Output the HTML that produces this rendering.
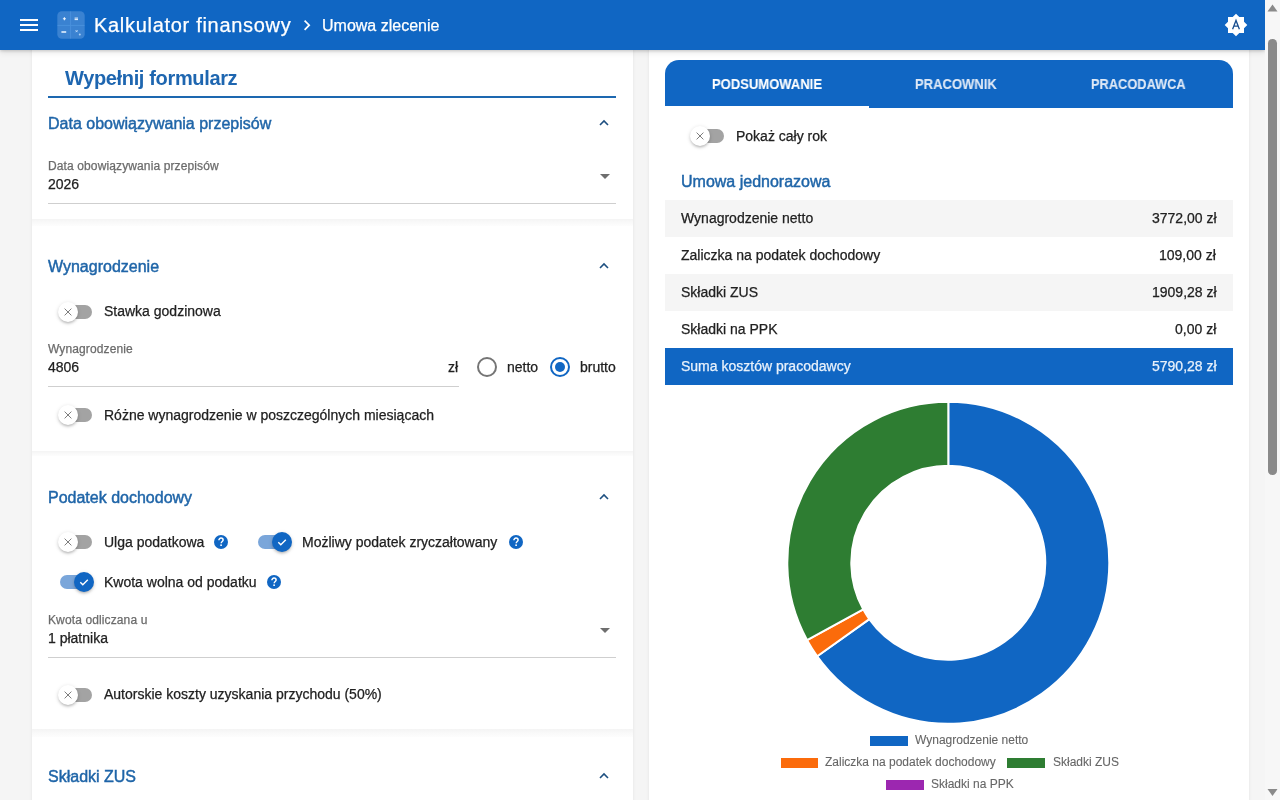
<!DOCTYPE html>
<html lang="pl">
<head>
<meta charset="utf-8">
<style>
*{box-sizing:border-box;margin:0;padding:0}
html,body{width:1280px;height:800px;overflow:hidden}
body{position:relative;background:#f5f5f5;font-family:"Liberation Sans",sans-serif;color:#212121;font-size:14px}
.abs{position:absolute}
.t{position:absolute;white-space:nowrap;line-height:1;will-change:transform;-webkit-text-stroke:0.25px currentColor}
#hdr{left:0;top:0;width:1265px;height:50px;background:#1066c3;box-shadow:0 1px 3px rgba(0,0,0,.18),0 3px 6px rgba(0,0,0,.08);z-index:10}
#sb{left:1265px;top:0;width:15px;height:800px;background:#f7f7f7;z-index:20}
.card{position:absolute;background:#fff}
.sep{background:linear-gradient(#f4f4f4,#fafafa 60%,#fdfdfd)}
.uline{position:absolute;height:1px;background:#cfcfcf}
.trk{width:32px;height:14px;border-radius:7px;background:#a3a3a3}
.trk.on{background:#7aa6da}
.thm{width:20px;height:20px;border-radius:50%;background:#fff;box-shadow:0 2px 3px -1px rgba(0,0,0,.25),0 1px 4px 0 rgba(0,0,0,.14)}
.thm svg{display:block}
.thm.on{background:#1066c3}
.radio{width:20px;height:20px;border-radius:50%;border:2px solid #757575}
.radio.sel{border-color:#1066c3}
.radio.sel div{position:absolute;left:3px;top:3px;width:10px;height:10px;border-radius:50%;background:#1066c3}
.help{width:14px;height:14px;border-radius:50%;background:#1066c3}
.help svg{display:block}
</style>
</head>
<body>

<div id="hdr" class="abs">
  <svg class="abs" style="left:16.5px;top:13px" width="24" height="24" viewBox="0 0 24 24"><path fill="#fff" d="M3 18h18v-2H3v2zm0-5h18v-2H3v2zm0-7v2h18V6H3z"/></svg>
  <svg class="abs" style="left:57px;top:11px" width="28" height="28" viewBox="0 0 28 28"><rect x="0.3" y="0.3" width="27.4" height="27.4" rx="4.5" fill="#3a82d1"/><path d="M0.5 14.4H27.5M13.6 0.5V27.5" stroke="#4b92dc" stroke-width="0.9"/><path d="M7.4 6.2v3M5.9 7.7h3" stroke="#eef6ff" stroke-width="1.1"/><path d="M17.6 7.1h3.4M17.6 8.6h3.4" stroke="#eef6ff" stroke-width="1"/><path d="M4.4 21h4.8" stroke="#eef6ff" stroke-width="1.5"/><path d="M18.6 19.2l2 2M20.6 19.2l-2 2" stroke="#d6e9ff" stroke-width="0.8"/><circle cx="22.8" cy="23.4" r="1" fill="#a9cff7"/></svg>
  <div class="t" style="left:94px;top:15px;font-size:20px;color:#fff;letter-spacing:0.7px">Kalkulator finansowy</div>
  <svg class="abs" style="left:300px;top:17px" width="16" height="16" viewBox="0 0 16 16"><path d="M4.6 3.6l4.6 4.6-4.6 4.6" stroke="#fff" stroke-width="1.7" fill="none"/></svg>
  <div class="t" style="left:322px;top:17.5px;font-size:16px;color:#fff">Umowa zlecenie</div>
  <svg class="abs" style="left:1224px;top:12.75px" width="24" height="24" viewBox="0 0 24 24"><path fill="#fff" d="M20 8.69V4h-4.69L12 .69 8.69 4H4v4.69L.69 12 4 15.31V20h4.69L12 23.31 15.31 20H20v-4.69L23.31 12 20 8.69z"/><path d="M8.6 16.2L12 7.4l3.4 8.8M9.8 13.2h4.4" stroke="#1a4f8f" stroke-width="1.3" fill="none"/></svg>
</div>
<div id="sb" class="abs">
<svg class="abs" style="left:0;top:0" width="15" height="800" viewBox="0 0 15 800"><path d="M2.5 11.5L7.5 4.5L12.5 11.5z" fill="#8a8a8a"/><path d="M2.5 789L7.5 796L12.5 789z" fill="#8a8a8a"/></svg>
<div class="abs" style="left:3px;top:39px;width:8.5px;height:436px;border-radius:4.25px;background:#8a8a8a"></div>
</div>


<div class="abs" style="left:32px;top:40px;width:601px;height:780px;background:#f9f9f9;box-shadow:0 0 3px rgba(0,0,0,.08)"></div>
<div class="card" style="left:32px;top:40px;width:601px;height:780px"></div>
<div class="abs sep" style="left:32px;top:219px;width:601px;height:7px"></div>
<div class="abs sep" style="left:32px;top:451px;width:601px;height:5px"></div>
<div class="abs sep" style="left:32px;top:728.5px;width:601px;height:8.5px"></div>
<div class="card" style="left:649px;top:40px;width:600px;height:780px;box-shadow:0 0 3px rgba(0,0,0,.08)"></div>

<div class="t" style="left:64.5px;top:68.47px;font-size:20px;color:#1e66b0;font-weight:700;letter-spacing:-0.35px;-webkit-text-stroke:0">Wypełnij formularz</div>
<div class="abs" style="left:48px;top:96px;width:568px;height:2px;background:#1d68b0"></div>
<div class="t" style="left:48px;top:116.36px;font-size:16px;color:#1f65a8;font-weight:400;-webkit-text-stroke:0.45px #1f65a8">Data obowiązywania przepisów</div>
<svg class="abs" style="left:598px;top:119px" width="12" height="8" viewBox="0 0 12 8"><path d="M2 6l4-4 4 4" stroke="#1d4f80" stroke-width="1.6" fill="none"/></svg>
<div class="t" style="left:48px;top:160.34px;font-size:12px;color:#6b6b6b;font-weight:400;letter-spacing:0.12px">Data obowiązywania przepisów</div>
<div class="t" style="left:48px;top:177.15px;font-size:14px;color:#212121;font-weight:400;">2026</div>
<svg class="abs" style="left:600px;top:174px" width="10" height="5" viewBox="0 0 10 5"><path d="M0 0h10L5 5z" fill="#6e6e6e"/></svg>
<div class="uline" style="left:48px;top:203px;width:568px"></div>
<div class="t" style="left:48px;top:259.36px;font-size:16px;color:#1f65a8;font-weight:400;-webkit-text-stroke:0.45px #1f65a8">Wynagrodzenie</div>
<svg class="abs" style="left:598px;top:262px" width="12" height="8" viewBox="0 0 12 8"><path d="M2 6l4-4 4 4" stroke="#1d4f80" stroke-width="1.6" fill="none"/></svg>
<div class="abs trk" style="left:60px;top:304.5px"></div><div class="abs thm" style="left:58px;top:301.5px"><svg width="20" height="20" viewBox="0 0 20 20"><path d="M6.6 6.6l6.8 6.8M13.4 6.6l-6.8 6.8" stroke="#7d7d7d" stroke-width="1" fill="none"/></svg></div>
<div class="t" style="left:103.9px;top:304.35px;font-size:14px;color:#212121;font-weight:400;">Stawka godzinowa</div>
<div class="t" style="left:48px;top:342.84px;font-size:12px;color:#6b6b6b;font-weight:400;letter-spacing:0.12px">Wynagrodzenie</div>
<div class="t" style="left:48px;top:359.75px;font-size:14px;color:#212121;font-weight:400;">4806</div>
<div class="uline" style="left:48px;top:386px;width:411px"></div>
<div class="t" style="left:448.4px;top:359.75px;font-size:14px;color:#212121;font-weight:400;">zł</div>
<div class="abs radio" style="left:477px;top:357px"></div>
<div class="t" style="left:507.3px;top:359.75px;font-size:14px;color:#212121;font-weight:400;">netto</div>
<div class="abs radio sel" style="left:549.5px;top:357px"><div></div></div>
<div class="t" style="left:579.5px;top:359.75px;font-size:14px;color:#212121;font-weight:400;">brutto</div>
<div class="abs trk" style="left:60px;top:408px"></div><div class="abs thm" style="left:58px;top:405px"><svg width="20" height="20" viewBox="0 0 20 20"><path d="M6.6 6.6l6.8 6.8M13.4 6.6l-6.8 6.8" stroke="#7d7d7d" stroke-width="1" fill="none"/></svg></div>
<div class="t" style="left:103.9px;top:408.05px;font-size:14px;color:#212121;font-weight:400;">Różne wynagrodzenie w poszczególnych miesiącach</div>
<div class="t" style="left:48px;top:490.36px;font-size:16px;color:#1f65a8;font-weight:400;-webkit-text-stroke:0.45px #1f65a8">Podatek dochodowy</div>
<svg class="abs" style="left:598px;top:493px" width="12" height="8" viewBox="0 0 12 8"><path d="M2 6l4-4 4 4" stroke="#1d4f80" stroke-width="1.6" fill="none"/></svg>
<div class="abs trk" style="left:60px;top:535px"></div><div class="abs thm" style="left:58px;top:532px"><svg width="20" height="20" viewBox="0 0 20 20"><path d="M6.6 6.6l6.8 6.8M13.4 6.6l-6.8 6.8" stroke="#7d7d7d" stroke-width="1" fill="none"/></svg></div>
<div class="t" style="left:103.9px;top:534.75px;font-size:14px;color:#212121;font-weight:400;">Ulga podatkowa</div>
<div class="abs help" style="left:214px;top:535px"><svg width="14" height="14" viewBox="0 0 14 14"><path d="M4.9 5.3c0-1.3 1-2.2 2.1-2.2s2.1.8 2.1 1.9c0 1.4-1.9 1.6-1.9 3.2" stroke="#fff" stroke-width="1.5" fill="none"/><rect x="6.3" y="9.4" width="1.6" height="1.6" fill="#fff"/></svg></div>
<div class="abs trk on" style="left:258px;top:535px"></div><div class="abs thm on" style="left:272px;top:532px"><svg width="20" height="20" viewBox="0 0 20 20"><path d="M6.3 10.2l2.5 2.5 5-5" stroke="#fff" stroke-width="1.4" fill="none"/></svg></div>
<div class="t" style="left:302.09999999999997px;top:534.75px;font-size:14px;color:#212121;font-weight:400;">Możliwy podatek zryczałtowany</div>
<div class="abs help" style="left:509px;top:535px"><svg width="14" height="14" viewBox="0 0 14 14"><path d="M4.9 5.3c0-1.3 1-2.2 2.1-2.2s2.1.8 2.1 1.9c0 1.4-1.9 1.6-1.9 3.2" stroke="#fff" stroke-width="1.5" fill="none"/><rect x="6.3" y="9.4" width="1.6" height="1.6" fill="#fff"/></svg></div>
<div class="abs trk on" style="left:60px;top:575px"></div><div class="abs thm on" style="left:74px;top:572px"><svg width="20" height="20" viewBox="0 0 20 20"><path d="M6.3 10.2l2.5 2.5 5-5" stroke="#fff" stroke-width="1.4" fill="none"/></svg></div>
<div class="t" style="left:103.9px;top:574.75px;font-size:14px;color:#212121;font-weight:400;">Kwota wolna od podatku</div>
<div class="abs help" style="left:267px;top:575px"><svg width="14" height="14" viewBox="0 0 14 14"><path d="M4.9 5.3c0-1.3 1-2.2 2.1-2.2s2.1.8 2.1 1.9c0 1.4-1.9 1.6-1.9 3.2" stroke="#fff" stroke-width="1.5" fill="none"/><rect x="6.3" y="9.4" width="1.6" height="1.6" fill="#fff"/></svg></div>
<div class="t" style="left:48px;top:613.59px;font-size:12px;color:#6b6b6b;font-weight:400;letter-spacing:0.12px">Kwota odliczana u</div>
<div class="t" style="left:48px;top:631.15px;font-size:14px;color:#212121;font-weight:400;">1 płatnika</div>
<svg class="abs" style="left:600px;top:628px" width="10" height="5" viewBox="0 0 10 5"><path d="M0 0h10L5 5z" fill="#6e6e6e"/></svg>
<div class="uline" style="left:48px;top:657px;width:568px"></div>
<div class="abs trk" style="left:60px;top:687.5px"></div><div class="abs thm" style="left:58px;top:684.5px"><svg width="20" height="20" viewBox="0 0 20 20"><path d="M6.6 6.6l6.8 6.8M13.4 6.6l-6.8 6.8" stroke="#7d7d7d" stroke-width="1" fill="none"/></svg></div>
<div class="t" style="left:103.9px;top:687.35px;font-size:14px;color:#212121;font-weight:400;">Autorskie koszty uzyskania przychodu (50%)</div>
<div class="t" style="left:48px;top:769.11px;font-size:16px;color:#1f65a8;font-weight:400;-webkit-text-stroke:0.45px #1f65a8">Składki ZUS</div>
<svg class="abs" style="left:598px;top:772px" width="12" height="8" viewBox="0 0 12 8"><path d="M2 6l4-4 4 4" stroke="#1d4f80" stroke-width="1.6" fill="none"/></svg>

<div class="abs" style="left:665px;top:60px;width:567.5px;height:47.5px;background:#1066c3;border-radius:14px 14px 0 0"></div>
<div class="abs" style="left:665px;top:105.5px;width:204px;height:2px;background:#fff"></div>
<div class="t" style="left:711.5px;top:77.05px;font-size:14px;color:#fff;font-weight:700;transform:scaleX(0.93);transform-origin:0 0;-webkit-text-stroke:0.1px currentColor">PODSUMOWANIE</div>
<div class="t" style="left:915.2px;top:77.05px;font-size:14px;color:#dfe9f6;font-weight:700;transform:scaleX(0.93);transform-origin:0 0;-webkit-text-stroke:0.1px currentColor">PRACOWNIK</div>
<div class="t" style="left:1090.6px;top:77.05px;font-size:14px;color:#dfe9f6;font-weight:700;transform:scaleX(0.915);transform-origin:0 0;-webkit-text-stroke:0.1px currentColor">PRACODAWCA</div>
<div class="abs trk" style="left:692px;top:129.25px"></div><div class="abs thm" style="left:690px;top:126.25px"><svg width="20" height="20" viewBox="0 0 20 20"><path d="M6.6 6.6l6.8 6.8M13.4 6.6l-6.8 6.8" stroke="#7d7d7d" stroke-width="1" fill="none"/></svg></div>
<div class="t" style="left:736.4px;top:129.15px;font-size:14px;color:#212121;font-weight:400;">Pokaż cały rok</div>
<div class="t" style="left:681px;top:174.36px;font-size:16px;color:#1f65a8;font-weight:400;-webkit-text-stroke:0.45px #1f65a8">Umowa jednorazowa</div>
<div class="abs" style="left:665px;top:200px;width:567.5px;height:37px;background:#f5f5f5"></div>
<div class="t" style="left:681px;top:211.15px;font-size:14px;color:#212121;font-weight:400;">Wynagrodzenie netto</div>
<div class="t" style="right:63.700000000000045px;top:211.15px;font-size:14px;color:#212121;font-weight:400;">3772,00 zł</div>
<div class="abs" style="left:665px;top:237px;width:567.5px;height:37px;background:#fff"></div>
<div class="t" style="left:681px;top:248.15px;font-size:14px;color:#212121;font-weight:400;">Zaliczka na podatek dochodowy</div>
<div class="t" style="right:63.700000000000045px;top:248.15px;font-size:14px;color:#212121;font-weight:400;">109,00 zł</div>
<div class="abs" style="left:665px;top:274px;width:567.5px;height:37px;background:#f5f5f5"></div>
<div class="t" style="left:681px;top:285.15px;font-size:14px;color:#212121;font-weight:400;">Składki ZUS</div>
<div class="t" style="right:63.700000000000045px;top:285.15px;font-size:14px;color:#212121;font-weight:400;">1909,28 zł</div>
<div class="abs" style="left:665px;top:311px;width:567.5px;height:37px;background:#fff"></div>
<div class="t" style="left:681px;top:322.15px;font-size:14px;color:#212121;font-weight:400;">Składki na PPK</div>
<div class="t" style="right:63.700000000000045px;top:322.15px;font-size:14px;color:#212121;font-weight:400;">0,00 zł</div>
<div class="abs" style="left:665px;top:348px;width:567.5px;height:37px;background:#1066c3"></div>
<div class="t" style="left:681px;top:359.15px;font-size:14px;color:#e8f1fb;font-weight:400;">Suma kosztów pracodawcy</div>
<div class="t" style="right:63.700000000000045px;top:359.15px;font-size:14px;color:#e8f1fb;font-weight:400;">5790,28 zł</div>
<svg class="abs" style="left:0;top:0" width="1280" height="800" viewBox="0 0 1280 800"><path d="M948.30 401.80 A161 161 0 1 1 817.20 656.25 L869.31 619.10 A97 97 0 1 0 948.30 465.80 Z" fill="#1066c3" stroke="#fff" stroke-width="2" stroke-linejoin="bevel"/><path d="M817.20 656.25 A161 161 0 0 1 807.09 640.13 L863.22 609.39 A97 97 0 0 0 869.31 619.10 Z" fill="#fb6b0b" stroke="#fff" stroke-width="2" stroke-linejoin="bevel"/><path d="M807.09 640.13 A161 161 0 0 1 948.30 401.80 L948.30 465.80 A97 97 0 0 0 863.22 609.39 Z" fill="#2e7d32" stroke="#fff" stroke-width="2" stroke-linejoin="bevel"/></svg>
<div class="abs" style="left:870px;top:736px;width:38px;height:10px;background:#1066c3"></div><div class="t" style="left:914.8px;top:734.24px;font-size:12px;color:#666;font-weight:400;-webkit-text-stroke:0.1px #666">Wynagrodzenie netto</div>
<div class="abs" style="left:781px;top:758px;width:37px;height:10px;background:#fb6b0b"></div><div class="t" style="left:825.4px;top:756.24px;font-size:12px;color:#666;font-weight:400;-webkit-text-stroke:0.1px #666">Zaliczka na podatek dochodowy</div>
<div class="abs" style="left:1007px;top:758px;width:38px;height:10px;background:#2e7d32"></div><div class="t" style="left:1052.6px;top:756.24px;font-size:12px;color:#666;font-weight:400;-webkit-text-stroke:0.1px #666">Składki ZUS</div>
<div class="abs" style="left:885.5px;top:780px;width:38px;height:10px;background:#9c27b0"></div><div class="t" style="left:930.8px;top:778.24px;font-size:12px;color:#666;font-weight:400;-webkit-text-stroke:0.1px #666">Składki na PPK</div>

</body>
</html>
